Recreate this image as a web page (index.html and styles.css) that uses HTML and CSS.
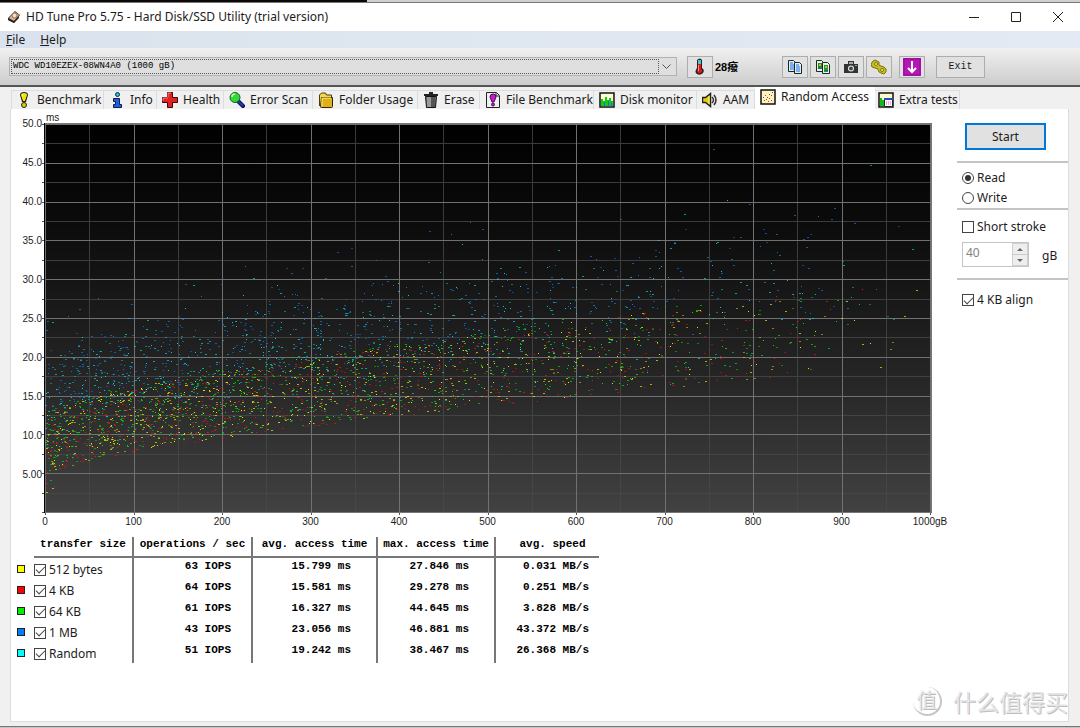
FILE: index.html
```html
<!DOCTYPE html>
<html lang="en">
<head>
<meta charset="utf-8">
<title>HD Tune Pro 5.75 - Hard Disk/SSD Utility (trial version)</title>
<link rel="stylesheet" href="styles.css">
</head>
<body>
<div class="desktop-top"></div>
<main class="window">
  <header class="titlebar">
    <svg class="app-icon" width="14" height="14" viewBox="0 0 14 14"><path d="M1 8L8 1l5 4-6 8-6-3z" fill="#3c3532"/><path d="M2 8l6-6 4 3-5 6z" fill="#d9b896"/><circle cx="7.500" cy="5.500" r="2.500" fill="#f3dfc8" stroke="#9a6a42"/><path d="M1 9l6 2 5-5v2l-5 5-6-3z" fill="#292625"/></svg>
    <h1 class="title">HD Tune Pro 5.75 - Hard Disk/SSD Utility (trial version)</h1>
    <div class="win-controls">
      <button class="win-btn" aria-label="Minimize"><svg width="10" height="10"><path d="M0 5.500h10" stroke="#222"/></svg></button>
      <button class="win-btn" aria-label="Maximize"><svg width="10" height="10"><path d="M.5.5h9v9h-9z" fill="none" stroke="#222"/></svg></button>
      <button class="win-btn" aria-label="Close"><svg width="10" height="10"><path d="M0 0l10 10M10 0L0 10" stroke="#222"/></svg></button>
    </div>
  </header>
  <nav class="menubar">
    <button class="menu"><u>F</u>ile</button>
    <button class="menu"><u>H</u>elp</button>
  </nav>
  <section class="toolbar">
    <div class="drive">
      <select class="drive-select" aria-label="Drive"><option>WDC WD10EZEX-08WN4A0 (1000 gB)</option></select>
      <svg class="drive-arrow" width="9" height="6"><path d="M.5.5l4 4 4-4" fill="none" stroke="#555"/></svg>
    </div>
    <button class="tool" aria-label="Temperature"><svg width="16" height="18" viewBox="0 0 16 18"><path d="M5 2q3-3 5 0v8q3 2 1 5-3 3-6 1-3-2 0-6z" fill="#222"/><path d="M6 2h3v4H6z" fill="#4bc5d5"/><path d="M6 6h3v5q2 1 1 3-2 2-4 1-2-2 0-4z" fill="#e01818"/><path d="M6 7h1v6H6z" fill="#ff8c80"/></svg></button>
    <output class="temp">28癈</output>
    <div class="tool-group">
      <button class="tool" aria-label="Copy text"><svg width="16" height="16" viewBox="0 0 16 16"><path d="M1.500 1.500h5l2 2v9h-7z" fill="#d9f1ff" stroke="#222"/><path d="M7.500 3.500h5l2 2v9h-7z" fill="#d9f1ff" stroke="#222"/><path d="M3 4h3M3 6h4M3 8h4M3 10h4M9 6h3M9 8h4M9 10h4M9 12h4" stroke="#1a72cf"/></svg></button>
      <button class="tool" aria-label="Copy image"><svg width="16" height="16" viewBox="0 0 16 16"><path d="M1.500 1.500h5l2 2v9h-7z" fill="#e8f5e8" stroke="#222"/><path d="M7.500 3.500h5l2 2v9h-7z" fill="#e8f5e8" stroke="#222"/><path d="M3 4h4v6H3z" fill="#188f30"/><path d="M9 6h4v7H9z" fill="#18a038"/><path d="M4 5h2v2H4zM10 7h2v2h-2z" fill="#e8b020"/><path d="M3 9h3v1H3zM10 11h3v1h-3z" fill="#2458b8"/></svg></button>
      <button class="tool" aria-label="Screenshot"><svg width="16" height="16" viewBox="0 0 16 16"><path d="M1 5h4V2h6v3h4v9H1z" fill="#333"/><path d="M6 3h4v2H6z" fill="#aaa"/><circle cx="8" cy="9.500" r="3" fill="#eee"/><circle cx="8" cy="9.500" r="2" fill="#3b4a45"/><path d="M12 6h2v1h-2z" fill="#53d453"/></svg></button>
      <button class="tool" aria-label="Options"><svg width="16" height="16" viewBox="0 0 16 16"><path d="M2 2l2-1 2 1 2 1v3l2 1 3 1 2 2v3l-2 2-3-1-2-1-1-3-3-1-3-1-1-3z" fill="#c9bb1b" stroke="#7d7410"/><circle cx="5" cy="5" r="1.500" fill="#f6ef7b" stroke="#827714"/><circle cx="11" cy="11" r="1.500" fill="#f6ef7b" stroke="#827714"/></svg></button>
      <button class="tool tool-save" aria-label="Save"><svg width="18" height="18" viewBox="0 0 18 18"><path d="M0 0h18v18H0z" fill="#b517b5"/><path d="M1 1h16v16H1z" fill="none" stroke="#8f108f"/><path d="M9 3v11M5 10l4 4 4-4" fill="none" stroke="#fff" stroke-width="2"/></svg></button>
      <button class="exit">Exit</button>
    </div>
  </section>
  <nav class="tabs" role="tablist">
    <button class="tab" role="tab"><svg width="16" height="16" viewBox="0 0 16 16"><path d="M4 3q0-3 4-3t4 3l-2 7H6z" fill="#222"/><path d="M5 3q0-2 3-2t3 2L9 9H7z" fill="#f0e400"/><path d="M6 3q0-1 1-1v4z" fill="#fffbb0"/><circle cx="8" cy="13" r="2.500" fill="#d9cf00" stroke="#222"/></svg>Benchmark</button>
    <button class="tab" role="tab"><svg width="16" height="16" viewBox="0 0 16 16"><circle cx="8.500" cy="2.500" r="2" fill="#28c4f0" stroke="#123"/><path d="M4.500 6.500h6v6h2v3h-8v-3h2v-3h-2z" fill="#1860e8" stroke="#101c40"/></svg>Info</button>
    <button class="tab" role="tab"><svg width="16" height="16" viewBox="0 0 16 16"><path d="M5.500.5h5v5h5v5h-5v5h-5v-5h-5v-5h5z" fill="#e02222" stroke="#3a0808"/><path d="M6 5V1h3M1 9V6h5" fill="none" stroke="#ff8080"/></svg>Health</button>
    <button class="tab" role="tab"><svg width="16" height="16" viewBox="0 0 16 16"><path d="M9 9l5 5" stroke="#10104a" stroke-width="4" stroke-linecap="round"/><path d="M9 9l5 5" stroke="#2038c8" stroke-width="2"/><circle cx="6" cy="5.500" r="5" fill="#30d838" stroke="#186018"/><path d="M3 5q0-3 3-3" fill="none" stroke="#caffc0" stroke-width="1.500"/></svg>Error Scan</button>
    <button class="tab" role="tab"><svg width="16" height="16" viewBox="0 0 16 16"><path d="M1.500 14V3l2-2h4l1 2h5v2" fill="#f3d947" stroke="#4a3c08"/><path d="M3.500 5.500h11v9q0 1-1 1h-10q-1 0-1-1z" fill="#dfb018" stroke="#322806"/><path d="M4 6h9M4 6v8" stroke="#fff08a"/></svg>Folder Usage</button>
    <button class="tab" role="tab"><svg width="16" height="16" viewBox="0 0 16 16"><path d="M6 0h4v2H6zM1 2h14v2H1z" fill="#222"/><path d="M2.500 4.500h11l-1 11h-9z" fill="#777" stroke="#111"/><path d="M5 5v10M7 5v10" stroke="#bbb"/><path d="M9 5v10M11 5v10" stroke="#333"/></svg>Erase</button>
    <button class="tab" role="tab"><svg width="16" height="16" viewBox="0 0 16 16"><path d="M1.500.5h10l3 3v12h-13z" fill="#eee" stroke="#222"/><path d="M11 1v3h3" fill="none" stroke="#222"/><path d="M5 5q0-3 3-3t3 3l-2 5H7z" fill="#c818d0" stroke="#411044"/><circle cx="8" cy="12.500" r="1.500" fill="#c818d0" stroke="#411044"/></svg>File Benchmark</button>
    <button class="tab" role="tab"><svg width="16" height="16" viewBox="0 0 16 16"><path d="M1 1h14v14H1z" fill="#fffbd0" stroke="#111" stroke-width="1.500"/><path d="M2 14V7h2v2h2V5h2v3h2V6h2v3h2v5z" fill="#10cc18"/><path d="M5 10h1v4H5zM9 9h1v5H9zM12 11h1v3h-1z" fill="#2864e8"/></svg>Disk monitor</button>
    <button class="tab" role="tab"><svg width="16" height="16" viewBox="0 0 16 16"><path d="M.5 5.500h3l5-4v13l-5-4h-3z" fill="#e2cd10" stroke="#222" stroke-width="1.500"/><path d="M7 4v8" stroke="#fff68a"/><path d="M10 5q3 3 0 6M12 3q4 5 0 10" fill="none" stroke="#333" stroke-width="1.500"/></svg>AAM</button>
    <button class="tab tab-active" role="tab" aria-selected="true"><svg width="16" height="16" viewBox="0 0 16 16"><path d="M1 1h14v14H1z" fill="#fff4b8" stroke="#111" stroke-width="1.500"/><path d="M3 8h1v1H3zM6 10h1v1H6zM9 5h1v1H9zM12 3h1v1h-1z" fill="#2850e8"/><path d="M4 11h1v1H4zM7 8h1v1H7zM11 6h1v1h-1zM11 11h1v1h-1z" fill="#e02020"/><path d="M5 6h1v1H5zM9 9h1v1H9zM8 12h1v1H8z" fill="#b030b0"/></svg>Random Access</button>
    <button class="tab" role="tab"><svg width="16" height="16" viewBox="0 0 16 16"><path d="M1 1h14v14H1z" fill="#fff8c8" stroke="#111" stroke-width="1.500"/><path d="M2 6h2v2h2v6H2z" fill="#10bb18"/><path d="M6.500 6.500h8v8h-8z" fill="#fff" stroke="#223"/><path d="M6 6h9v2H6z" fill="#2448c8"/><path d="M8 10h5M8 12h5" stroke="#e050a0" stroke-dasharray="1 1"/></svg>Extra tests</button>
  </nav>
  <section class="page">
    <div class="results">
      <div class="chart">
        <div class="unit">ms</div>
        <div class="y-axis" id="y-axis"></div>
        <svg class="plot" id="plot" viewBox="0 0 890 392" preserveAspectRatio="none" role="img" aria-label="Access time by position">
          <defs><linearGradient id="shade" x1="0" y1="0" x2="0" y2="1"><stop offset="0" stop-color="#000"/><stop offset=".25" stop-color="#0b0b0b"/><stop offset=".65" stop-color="#252525"/><stop offset="1" stop-color="#424242"/></linearGradient></defs>
          <path d="M2 0h888v390H2z" fill="url(#shade)"/>
        </svg>
        <div class="x-axis" id="x-axis"></div>
      </div>
      <table class="summary">
        <thead><tr><td class="swatch-cell"></td><th>transfer size</th><th>operations / sec</th><th>avg. access time</th><th>max. access time</th><th>avg. speed</th></tr></thead>
        <tbody>
          <tr><td class="swatch-cell"><span class="swatch yellow"></span></td><td class="size"><label class="option"><input type="checkbox" checked>512 bytes</label></td><td>63 IOPS</td><td>15.799 ms</td><td>27.846 ms</td><td>0.031 MB/s</td></tr>
          <tr><td class="swatch-cell"><span class="swatch red"></span></td><td class="size"><label class="option"><input type="checkbox" checked>4 KB</label></td><td>64 IOPS</td><td>15.581 ms</td><td>29.278 ms</td><td>0.251 MB/s</td></tr>
          <tr><td class="swatch-cell"><span class="swatch green"></span></td><td class="size"><label class="option"><input type="checkbox" checked>64 KB</label></td><td>61 IOPS</td><td>16.327 ms</td><td>44.645 ms</td><td>3.828 MB/s</td></tr>
          <tr><td class="swatch-cell"><span class="swatch blue"></span></td><td class="size"><label class="option"><input type="checkbox" checked>1 MB</label></td><td>43 IOPS</td><td>23.056 ms</td><td>46.881 ms</td><td>43.372 MB/s</td></tr>
          <tr><td class="swatch-cell"><span class="swatch cyan"></span></td><td class="size"><label class="option"><input type="checkbox" checked>Random</label></td><td>51 IOPS</td><td>19.242 ms</td><td>38.467 ms</td><td>26.368 MB/s</td></tr>
        </tbody>
      </table>
    </div>
    <aside class="side">
      <button class="start">Start</button>
      <div class="group modes">
        <label class="option"><input type="radio" name="mode" checked>Read</label>
        <label class="option"><input type="radio" name="mode">Write</label>
      </div>
      <div class="group stroke">
        <label class="option"><input type="checkbox">Short stroke</label>
        <div class="amount">
          <div class="spinner">
            <input class="spin-value" id="capacity" type="text" value="40" disabled>
            <div class="spin-buttons">
              <button class="spin" aria-label="Increase" disabled><svg width="6" height="3"><path d="M0 3l3-3 3 3z" fill="#666"/></svg></button>
              <button class="spin" aria-label="Decrease" disabled><svg width="6" height="3"><path d="M0 0l3 3 3-3z" fill="#666"/></svg></button>
            </div>
          </div>
          <label class="amount-unit" for="capacity">gB</label>
        </div>
      </div>
      <div class="group align">
        <label class="option"><input type="checkbox" checked>4 KB align</label>
      </div>
    </aside>
  </section>
</main>
<div class="desktop-bottom"></div>
<div class="watermark"><span class="badge">值</span><span>什么值得买</span></div>
<script src="chart.js"></script>
</body>
</html>
```
FILE: styles.css
```css
* { box-sizing: border-box; }
body {
  margin: 0;
  min-height: 100vh;
  display: flex;
  flex-direction: column;
  background: #f0f0f0;
  color: #1c1c1c;
  font: 12px/16px "Noto Sans", "Noto Sans CJK SC", sans-serif;
}
button, input, select { font: inherit; color: inherit; margin: 0; padding: 0; border: 0; border-radius: 0; background: none; }
svg { display: block; flex: none; }
.desktop-top { height: 3px; border-bottom: 1px solid #777; background: linear-gradient(90deg, #0c0808 34%, #d0d0d0 34%); }
.desktop-bottom { height: 2px; border-top: 1px solid #777; background: #c4c4c4; }
.window { flex: 1; display: flex; flex-direction: column; }

.titlebar { display: flex; align-items: center; height: 28px; padding: 0 1px 0 7px; background: #fff; }
.title { flex: 1; margin: 0 0 0 5px; font-size: 12px; font-weight: 400; line-height: 16px; }
.win-controls { display: flex; }
.win-btn { display: flex; align-items: center; justify-content: center; width: 42px; height: 28px; }

.menubar { display: flex; gap: 15px; height: 17px; padding-left: 6px; background: linear-gradient(90deg, #dae3ed, #e4eaf3); }
.menu { line-height: 17px; font-size: 12px; }

.toolbar {
  display: flex;
  align-items: center;
  height: 39px;
  padding: 0 95px 0 9px;
  border-bottom: 2px solid #555;
  background: linear-gradient(#f0f0f0, #cdcdcd);
}
.drive { flex: 1; display: grid; grid-template-columns: 1fr 19px; align-items: center; height: 19px; border: 1px solid #adb2b5; background: #dfdfdf; }
.drive-select { appearance: none; grid-column: 1 / 3; grid-row: 1; height: 15px; margin: 0 17px 0 1px; padding-left: 1px; border: 1px dotted #555; font: 9px/13px "Liberation Mono", monospace; color: #000; }
.drive-arrow { grid-column: 2; grid-row: 1; justify-self: center; }
.tool { display: flex; align-items: center; justify-content: center; width: 26px; height: 22px; border: 1px solid #adadad; background: #e1e1e1; }
.drive + .tool { margin-left: 10px; }
.temp { width: 69px; padding-left: 2px; font: bold 11px/16px "Liberation Sans", "Noto Sans CJK SC", sans-serif; color: #000; }
.tool-group { display: flex; gap: 2px; }
.tool-save { margin-left: 5px; }
.exit { width: 49px; height: 22px; margin-left: 9px; border: 1px solid #adadad; background: #e1e1e1; font: 10px/16px "Liberation Mono", monospace; }

.tabs {
  display: grid;
  grid-template-columns: 93px 53px 67px 89px 105px 62px 114px 103px 58px 120px 85px;
  align-items: end;
  height: 22px;
  padding-left: 11px;
}
.tab { display: flex; align-items: center; gap: 5px; height: 19px; padding-left: 5px; border: 1px solid #dcdcdc; border-left: 0; border-bottom: 0; white-space: nowrap; }
.tab:first-child { padding-left: 4px; border-left: 1px solid #dcdcdc; }
.tab:last-child { padding-left: 3px; }
.tab-active { height: 22px; padding-bottom: 3px; border-color: #fff; background: #fff; }

.page { flex: 1; display: flex; margin: 0 11px 4px 10px; border: 1px solid #dcdcdc; border-top: 0; background: #fff; }
.results { flex: 1; min-width: 0; }
.chart { display: grid; grid-template-columns: 31px 1fr; grid-template-rows: 14px 392px 16px; font: 10px/12px "Liberation Sans", sans-serif; }
.unit { grid-column: 2; padding: 3px 0 0 4px; }
.y-axis { grid-column: 1; display: flex; flex-direction: column; justify-content: space-between; padding: 1px 0 40px; }
.y-axis span { display: flex; align-items: center; justify-content: flex-end; height: 0; }
.plot { width: 100%; height: 392px; }
.x-axis { grid-column: 2; display: flex; justify-content: space-between; padding: 1px 2px 0 3px; }
.x-axis span { display: flex; justify-content: center; width: 0; }

.summary { margin: 6px 0 0 3px; border-collapse: separate; border-spacing: 0; table-layout: fixed; width: 585px; font: bold 11px/12px "Liberation Mono", monospace; color: #000; }
.summary th, .summary td { padding: 0; text-align: right; }
.summary th { height: 19px; padding-bottom: 5px; border-bottom: 2px solid #777; text-align: center; }
.summary th:last-child { padding-left: 10px; }
.summary td { height: 21px; padding: 0 18px 6px 0; }
.summary th + th, .summary td + td + td { border-left: 2px solid #777; }
.summary th:nth-child(2) { width: 98px; }
.summary th:nth-child(3) { width: 119px; }
.summary th:nth-child(4) { width: 125px; }
.summary th:nth-child(5) { width: 118px; }
.summary td:nth-child(3) { padding-right: 20px; }
.summary td:nth-child(4), .summary td:nth-child(5) { padding-right: 25px; }
.summary td:last-child { padding-right: 10px; }
.summary .swatch-cell { width: 20px; padding: 0 0 0 3px; }
.summary .size { padding: 2px 0 0; font: 12px/16px "Noto Sans", sans-serif; color: #1c1c1c; }
.swatch { display: block; width: 8px; height: 8px; border: 1px solid #222; }
.yellow { background: #ff0; }
.red { background: #f00; }
.green { background: #0e0; }
.blue { background: #0080ff; }
.cyan { background: #0ff; }

.option { display: flex; align-items: center; gap: 3px; }
.option input { appearance: none; flex: none; display: grid; place-items: center; width: 12px; height: 12px; border: 1px solid #444; background: #fff; }
.option input[type="radio"] { border-radius: 50%; }
.option input[type="radio"]:checked::before { content: ""; width: 6px; height: 6px; border-radius: 50%; background: #333; }
.option input[type="checkbox"]:checked::before { content: ""; width: 8px; height: 4px; border: solid #444; border-width: 0 0 1px 1px; transform: translateY(-1px) rotate(-45deg); }

.side { display: flex; flex-direction: column; width: 136px; padding: 14px 0 0 25px; }
.start { width: 81px; height: 27px; margin: 0 0 11px 8px; border: 2px solid #0078d7; background: #e1e1e1; }
.group { padding-left: 5px; border-top: 2px solid #c4c4c4; }
.modes { display: flex; flex-direction: column; gap: 4px; height: 47px; padding-top: 7px; }
.stroke { height: 70px; padding-top: 9px; }
.align { padding-top: 12px; }
.amount { display: flex; align-items: center; gap: 13px; margin-top: 7px; }
.amount-unit { padding-top: 2px; }
.spinner { display: flex; width: 67px; height: 25px; border: 1px solid #c4c4c4; }
.spin-value { flex: 1; min-width: 0; padding: 0 0 3px 3px; color: #838383; background: #fff; }
.spin-buttons { display: flex; flex-direction: column; width: 16px; border: 1px solid #d0d0d0; }
.spin { flex: 1; display: flex; align-items: center; justify-content: center; background: #eee; }
.spin + .spin { border-top: 1px solid #ccc; }

.watermark { position: absolute; right: 12px; bottom: 10px; display: flex; align-items: center; gap: 11px; color: #e6e6e6; text-shadow: 1px 1px #bdbdbd; font: 23px/34px "Noto Sans CJK SC", sans-serif; }
.badge { width: 29px; height: 29px; border-radius: 50%; border-right: 2px solid #c6c6c6; border-bottom: 2px solid #c6c6c6; font-size: 20px; line-height: 26px; text-align: center; }
```
FILE: chart.js
```js
const svg = document.getElementById('plot');
const LEFT = 3, TOP = 1, WIDTH = 885, HEIGHT = 388;

function addPath(d, fill, opacity) {
  const p = document.createElementNS('http://www.w3.org/2000/svg', 'path');
  p.setAttribute('d', d);
  p.setAttribute('fill', fill);
  p.setAttribute('opacity', opacity);
  svg.appendChild(p);
}

// Grid: every second line is a labelled one.
let minor = '', major = '', ticks = '';
for (let i = 0; i <= 20; i++) {
  const x = Math.round(LEFT + WIDTH * i / 20);
  const y = Math.round(TOP + HEIGHT * i / 20);
  const v = `M${x} 0h1v390h-1z`;
  const h = `M2 ${y}h888v1H2z`;
  if (i % 2) { minor += v + h; } else { major += v + h; ticks += `M${x} 389h1v3h-1z`; }
  ticks += `M0 ${y}h2v1H0z`;
}
addPath(minor, '#484848', .8);
addPath(major, '#717171', 1);
addPath(ticks, '#555', 1);
addPath('M2 0h888v1H2zM889 0h1v390h-1zM2 389h888v1H2z', '#777', 1);
addPath('M2 0h1v390H2z', '#000', 1);

// Samples, from a fixed seed.
let seed = 20757;
function rand() {
  seed = (seed * 1664525 + 1013904223) % 4294967296;
  return seed / 4294967296;
}
const series = [
  { color: '#f0e800', count: 740, low: 0, span: 8, extra: 0 },
  { color: '#f01010', count: 640, low: 0, span: 8, extra: 0 },
  { color: '#00e010', count: 780, low: .3, span: 8.2, extra: 0 },
  { color: '#0878e8', count: 600, low: 6, span: 8.6, extra: 2 },
  { color: '#10d0d0', count: 700, low: 1, span: 8.4, extra: 7 }
];
const dot = (gb, ms, w) => {
  const x = Math.round(LEFT + gb / 1000 * WIDTH);
  const y = Math.round(TOP + HEIGHT - ms / 50 * HEIGHT);
  return `M${x} ${y}h${w}v1h-${w}z`;
};
const paths = series.map(() => ['', '', '']);
series.forEach((s, k) => {
  for (let i = 0; i < s.count; i++) {
    const gb = 1000 * (1 - Math.pow(rand(), 1 / 2.1));
    const seek = 4.2 + .3 * Math.sqrt(gb) + .0055 * gb;
    const late = k > 2 && rand() < .15 ? rand() * 7 : 0;
    const ms = seek + s.low + rand() * (s.span + gb * .003) + rand() * s.extra + late;
    const level = Math.floor(rand() * 3);
    paths[k][level] += dot(gb, ms, level === 2 ? 1 : 2);
  }
});
const strays = [
  [4, 235, 30.2], [2, 932, 44.7], [3, 755, 46.8], [4, 722, 38.4], [3, 650, 37.8], [3, 795, 39.7],
  [3, 892, 39.2], [3, 888, 37.7], [3, 914, 37.3], [3, 494, 36.5], [3, 330, 33.5], [4, 693, 35],
  [3, 826, 35.8], [3, 785, 35.4], [3, 861, 35.4], [4, 711, 34.7], [4, 980, 33.9], [3, 856, 35.2],
  [0, 8, 3.1], [0, 1, 2.6], [1, 1, 3.8], [2, 6, 4.1], [3, 2, 24.6]
];
strays.forEach(([k, gb, ms]) => { paths[k][1] += dot(gb, ms, 2); });
[3, 4, 2, 1, 0].forEach(k => [.5, .7, .95].forEach((o, i) => addPath(paths[k][i], series[k].color, o)));

// Axis labels.
function label(id, text) {
  const span = document.createElement('span');
  span.textContent = text;
  document.getElementById(id).appendChild(span);
}
for (let v = 50; v >= 5; v -= 5) label('y-axis', v === 5 ? '5.00' : v.toFixed(1));
for (let v = 0; v <= 1000; v += 100) label('x-axis', v === 1000 ? '1000gB' : v);
```
